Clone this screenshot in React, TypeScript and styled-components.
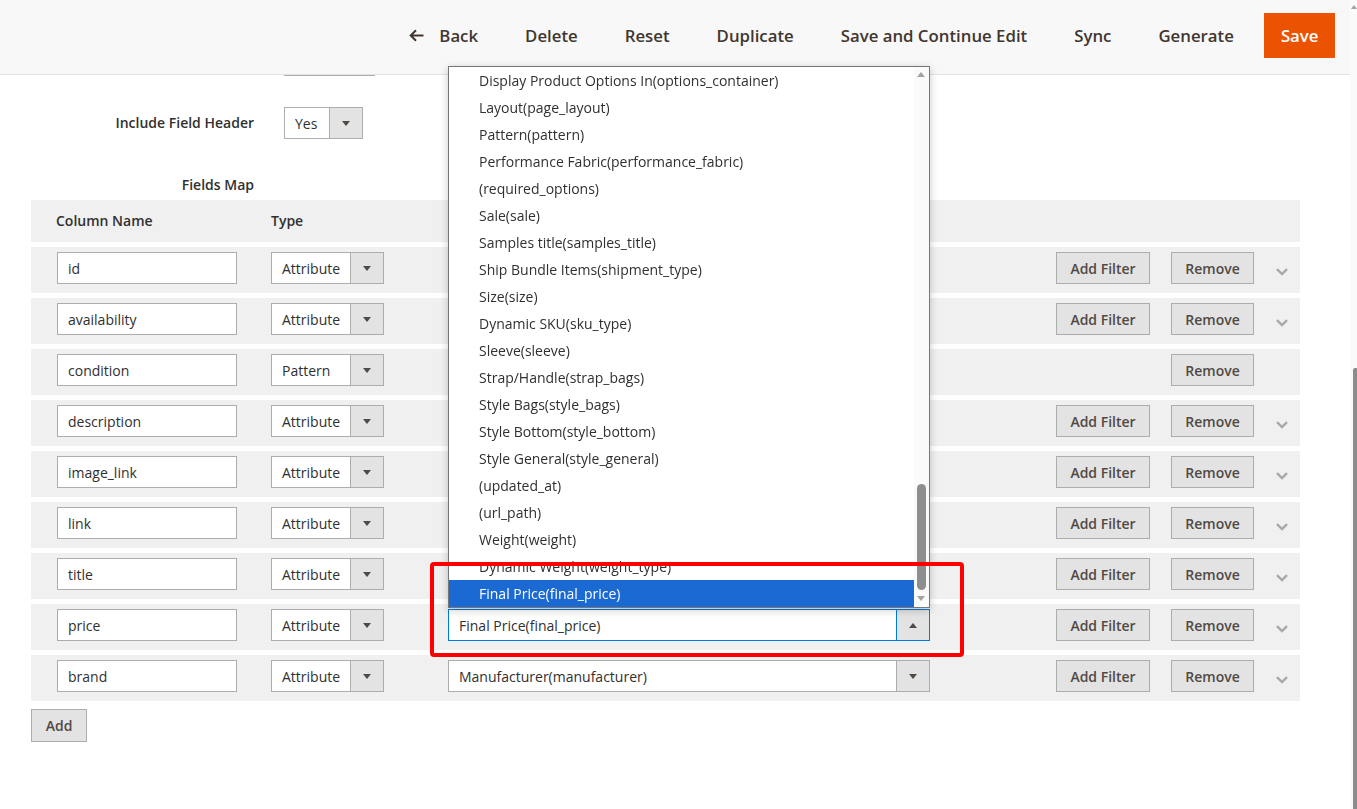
import React from "react";
import styled, { createGlobalStyle } from "styled-components";

const GlobalStyle = createGlobalStyle`
  html, body { margin: 0; padding: 0; background: #ffffff; }
  body {
    font-family: "Open Sans", "Noto Sans", "Liberation Sans", sans-serif;
    color: #303030;
    overflow: hidden;
  }
  * { box-sizing: border-box; }
`;

const Page = styled.div`
  position: relative;
  width: 1350px;
  min-height: 809px;
`;

const Header = styled.header`
  position: fixed;
  top: 0;
  left: 0;
  width: 1350px;
  height: 75px;
  background: #f8f8f8;
  border-bottom: 1px solid #e3e3e3;
  display: flex;
  justify-content: flex-end;
  align-items: flex-start;
  padding: 13px 15px 0 0;
  z-index: 10;
`;

const HeaderButton = styled.button`
  height: 45px;
  padding: 0 23.5px;
  border: 0;
  background: transparent;
  font-family: "Open Sans", "Noto Sans", sans-serif;
  font-size: 16.8px;
  font-weight: 600;
  color: #41362f;
  display: flex;
  align-items: center;
  gap: 15px;
  white-space: nowrap;
`;

const PrimaryButton = styled(HeaderButton)`
  background: #eb5202;
  color: #ffffff;
  padding: 0 16.5px;
  margin-left: 7px;
`;

const Content = styled.main`
  padding: 44px 50px 60px 31px;
`;

const FieldRow = styled.div<{ $mt: number }>`
  display: grid;
  grid-template-columns: 223px auto;
  column-gap: 30px;
  align-items: center;
  margin-top: ${(p) => p.$mt}px;
`;

const FieldLabel = styled.div`
  text-align: right;
  font-size: 14px;
  font-weight: 600;
  color: #303030;
  line-height: 20px;
`;

const SelectBox = styled.div<{ $w: number; $focus?: boolean }>`
  display: flex;
  width: ${(p) => p.$w}px;
  height: 32px;
  border: 1px solid ${(p) => (p.$focus ? "#007bdb" : "#adadad")};
  background: #ffffff;
`;

const SelectText = styled.div`
  flex: 1;
  min-width: 0;
  padding: 1px 0 0 10px;
  font-size: 14px;
  line-height: 29px;
  color: #303030;
  white-space: nowrap;
  overflow: hidden;
`;

const SelectArrow = styled.div<{ $focus?: boolean }>`
  width: 33px;
  background: #e3e3e3;
  border-left: 1px solid ${(p) => (p.$focus ? "#007bdb" : "#adadad")};
  display: flex;
  align-items: center;
  justify-content: center;
`;

const Triangle = styled.span<{ $up?: boolean }>`
  width: 0;
  height: 0;
  border-left: 4px solid transparent;
  border-right: 4px solid transparent;
  ${(p) =>
    p.$up
      ? "border-bottom: 5px solid #514943;"
      : "border-top: 5px solid #514943;"}
`;

const Table = styled.div`
  margin-top: 5px;
  width: 1269px;
`;

const TableHead = styled.div`
  display: grid;
  grid-template-columns: 215px 177px 1fr;
  align-items: center;
  height: 42px;
  padding: 0 0 2px 25px;
  background: #f0f0f0;
  font-size: 14px;
  font-weight: 600;
  color: #303030;
`;

const Row = styled.div`
  display: grid;
  grid-template-columns: 214px 177px 608px 115px 105px 24px;
  align-items: start;
  margin-top: 5px;
  padding: 5px 0 9px 26px;
  background: #f0f0f0;
`;

const TextInput = styled.div`
  width: 180px;
  height: 32px;
  border: 1px solid #adadad;
  background: #ffffff;
  padding: 1px 0 0 10px;
  font-size: 14px;
  line-height: 29px;
  color: #303030;
`;

const GrayButton = styled.button<{ $w: number }>`
  width: ${(p) => p.$w}px;
  height: 32px;
  padding: 0;
  border: 1px solid #adadad;
  background: #e3e3e3;
  font-family: "Open Sans", "Noto Sans", sans-serif;
  font-size: 14px;
  font-weight: 600;
  color: #514943;
`;

const AddButton = styled(GrayButton)`
  height: 33px;
  margin-top: 8px;
`;

const Chevron = styled.svg`
  margin-top: 16px;
  display: block;
`;

const Dropdown = styled.div`
  position: absolute;
  left: 448px;
  top: 66px;
  width: 482px;
  height: 542px;
  border: 1px solid #767676;
  background: #ffffff;
  box-shadow: 0 2px 8px rgba(0, 0, 0, 0.22);
  display: flex;
  z-index: 20;
`;

const OptionList = styled.div`
  flex: 1;
`;

const Option = styled.div<{ $selected?: boolean }>`
  height: 27px;
  line-height: 27px;
  padding-left: 30px;
  font-size: 14px;
  white-space: nowrap;
  color: ${(p) => (p.$selected ? "#ffffff" : "#303030")};
  background: ${(p) => (p.$selected ? "#1b6ad3" : "transparent")};
`;

const ListScroll = styled.div`
  position: relative;
  width: 15px;
  background: #fafafa;
`;

const ScrollTriangle = styled.span<{ $up?: boolean }>`
  position: absolute;
  left: 3px;
  ${(p) => (p.$up ? "top: 5px;" : "bottom: 6px;")}
  width: 0;
  height: 0;
  border-left: 4.5px solid transparent;
  border-right: 4.5px solid transparent;
  ${(p) =>
    p.$up
      ? "border-bottom: 5px solid #a3a3a3;"
      : "border-top: 5px solid #a3a3a3;"}
`;

const ListThumb = styled.div`
  position: absolute;
  left: 3px;
  top: 417px;
  width: 9px;
  height: 106px;
  border-radius: 5px;
  background: #8e8e8e;
`;

const Highlight = styled.div`
  position: absolute;
  left: 430px;
  top: 562px;
  width: 534px;
  height: 95px;
  border: 4px solid #ff0000;
  border-radius: 4px;
  z-index: 30;
  pointer-events: none;
`;

const PageScroll = styled.div`
  position: fixed;
  top: 0;
  right: 0;
  width: 7px;
  height: 100%;
  background: #fafafa;
  z-index: 40;
`;

const PageScrollArrow = styled.span`
  position: absolute;
  top: 5px;
  right: 0;
  width: 0;
  height: 0;
  border-left: 3px solid transparent;
  border-right: 3px solid transparent;
  border-bottom: 4px solid #a3a3a3;
`;

const PageThumb = styled.div`
  position: absolute;
  top: 368px;
  bottom: 0;
  right: 0;
  width: 4px;
  border-radius: 2px 0 0 0;
  background: #8c8c8c;
`;

type Mapping = {
  name: string;
  type: string;
  value: string;
  filter: boolean;
  focus?: boolean;
};

const rows: Mapping[] = [
  { name: "id", type: "Attribute", value: "SKU(sku)", filter: true },
  { name: "availability", type: "Attribute", value: "Quantity(quantity_and_stock_status)", filter: true },
  { name: "condition", type: "Pattern", value: "new", filter: false },
  { name: "description", type: "Attribute", value: "Description(description)", filter: true },
  { name: "image_link", type: "Attribute", value: "Base Image(image)", filter: true },
  { name: "link", type: "Attribute", value: "Product Url(url)", filter: true },
  { name: "title", type: "Attribute", value: "Product Name(name)", filter: true },
  { name: "price", type: "Attribute", value: "Final Price(final_price)", filter: true, focus: true },
  { name: "brand", type: "Attribute", value: "Manufacturer(manufacturer)", filter: true },
];

const options = [
  "Display Product Options In(options_container)",
  "Layout(page_layout)",
  "Pattern(pattern)",
  "Performance Fabric(performance_fabric)",
  "(required_options)",
  "Sale(sale)",
  "Samples title(samples_title)",
  "Ship Bundle Items(shipment_type)",
  "Size(size)",
  "Dynamic SKU(sku_type)",
  "Sleeve(sleeve)",
  "Strap/Handle(strap_bags)",
  "Style Bags(style_bags)",
  "Style Bottom(style_bottom)",
  "Style General(style_general)",
  "(updated_at)",
  "(url_path)",
  "Weight(weight)",
  "Dynamic Weight(weight_type)",
  "Final Price(final_price)",
];

function Select({ w, label, focus }: { w: number; label: string; focus?: boolean }) {
  return (
    <SelectBox $w={w} $focus={focus}>
      <SelectText>{label}</SelectText>
      <SelectArrow $focus={focus}>
        <Triangle $up={focus} />
      </SelectArrow>
    </SelectBox>
  );
}

const BackArrow = () => (
  <svg width="15" height="13" viewBox="0 0 15 13" fill="none">
    <path d="M14.5 6.5H2M7 1.2L1.7 6.5L7 11.8" stroke="#41362f" strokeWidth="2" />
  </svg>
);

export default function App() {
  return (
    <Page>
      <GlobalStyle />
      <Header>
        <HeaderButton>
          <BackArrow />
          Back
        </HeaderButton>
        <HeaderButton>Delete</HeaderButton>
        <HeaderButton>Reset</HeaderButton>
        <HeaderButton>Duplicate</HeaderButton>
        <HeaderButton>Save and Continue Edit</HeaderButton>
        <HeaderButton>Sync</HeaderButton>
        <HeaderButton>Generate</HeaderButton>
        <PrimaryButton>Save</PrimaryButton>
      </Header>

      <Content>
        <FieldRow $mt={0}>
          <FieldLabel>Field Delimiter</FieldLabel>
          <Select w={91} label="Comma" />
        </FieldRow>
        <FieldRow $mt={31}>
          <FieldLabel>Include Field Header</FieldLabel>
          <Select w={79} label="Yes" />
        </FieldRow>
        <FieldRow $mt={36}>
          <FieldLabel>Fields Map</FieldLabel>
          <div />
        </FieldRow>

        <Table>
          <TableHead>
            <div>Column Name</div>
            <div>Type</div>
            <div>Value</div>
          </TableHead>
          {rows.map((r) => (
            <Row key={r.name}>
              <TextInput>{r.name}</TextInput>
              <Select w={113} label={r.type} />
              <Select w={482} label={r.value} focus={r.focus} />
              <div>{r.filter && <GrayButton $w={94}>Add Filter</GrayButton>}</div>
              <GrayButton $w={83}>Remove</GrayButton>
              <div>
                {r.filter && (
                  <Chevron width="12" height="8" viewBox="0 0 12 8">
                    <path d="M1 1.2L6 6L11 1.2" fill="none" stroke="#a8a8a8" strokeWidth="2.4" />
                  </Chevron>
                )}
              </div>
            </Row>
          ))}
        </Table>
        <AddButton $w={56}>Add</AddButton>
      </Content>

      <Dropdown>
        <OptionList>
          {options.map((o, i) => (
            <Option key={o} $selected={i === options.length - 1}>
              {o}
            </Option>
          ))}
        </OptionList>
        <ListScroll>
          <ScrollTriangle $up />
          <ListThumb />
          <ScrollTriangle />
        </ListScroll>
      </Dropdown>

      <Highlight />

      <PageScroll>
        <PageScrollArrow />
        <PageThumb />
      </PageScroll>
    </Page>
  );
}
